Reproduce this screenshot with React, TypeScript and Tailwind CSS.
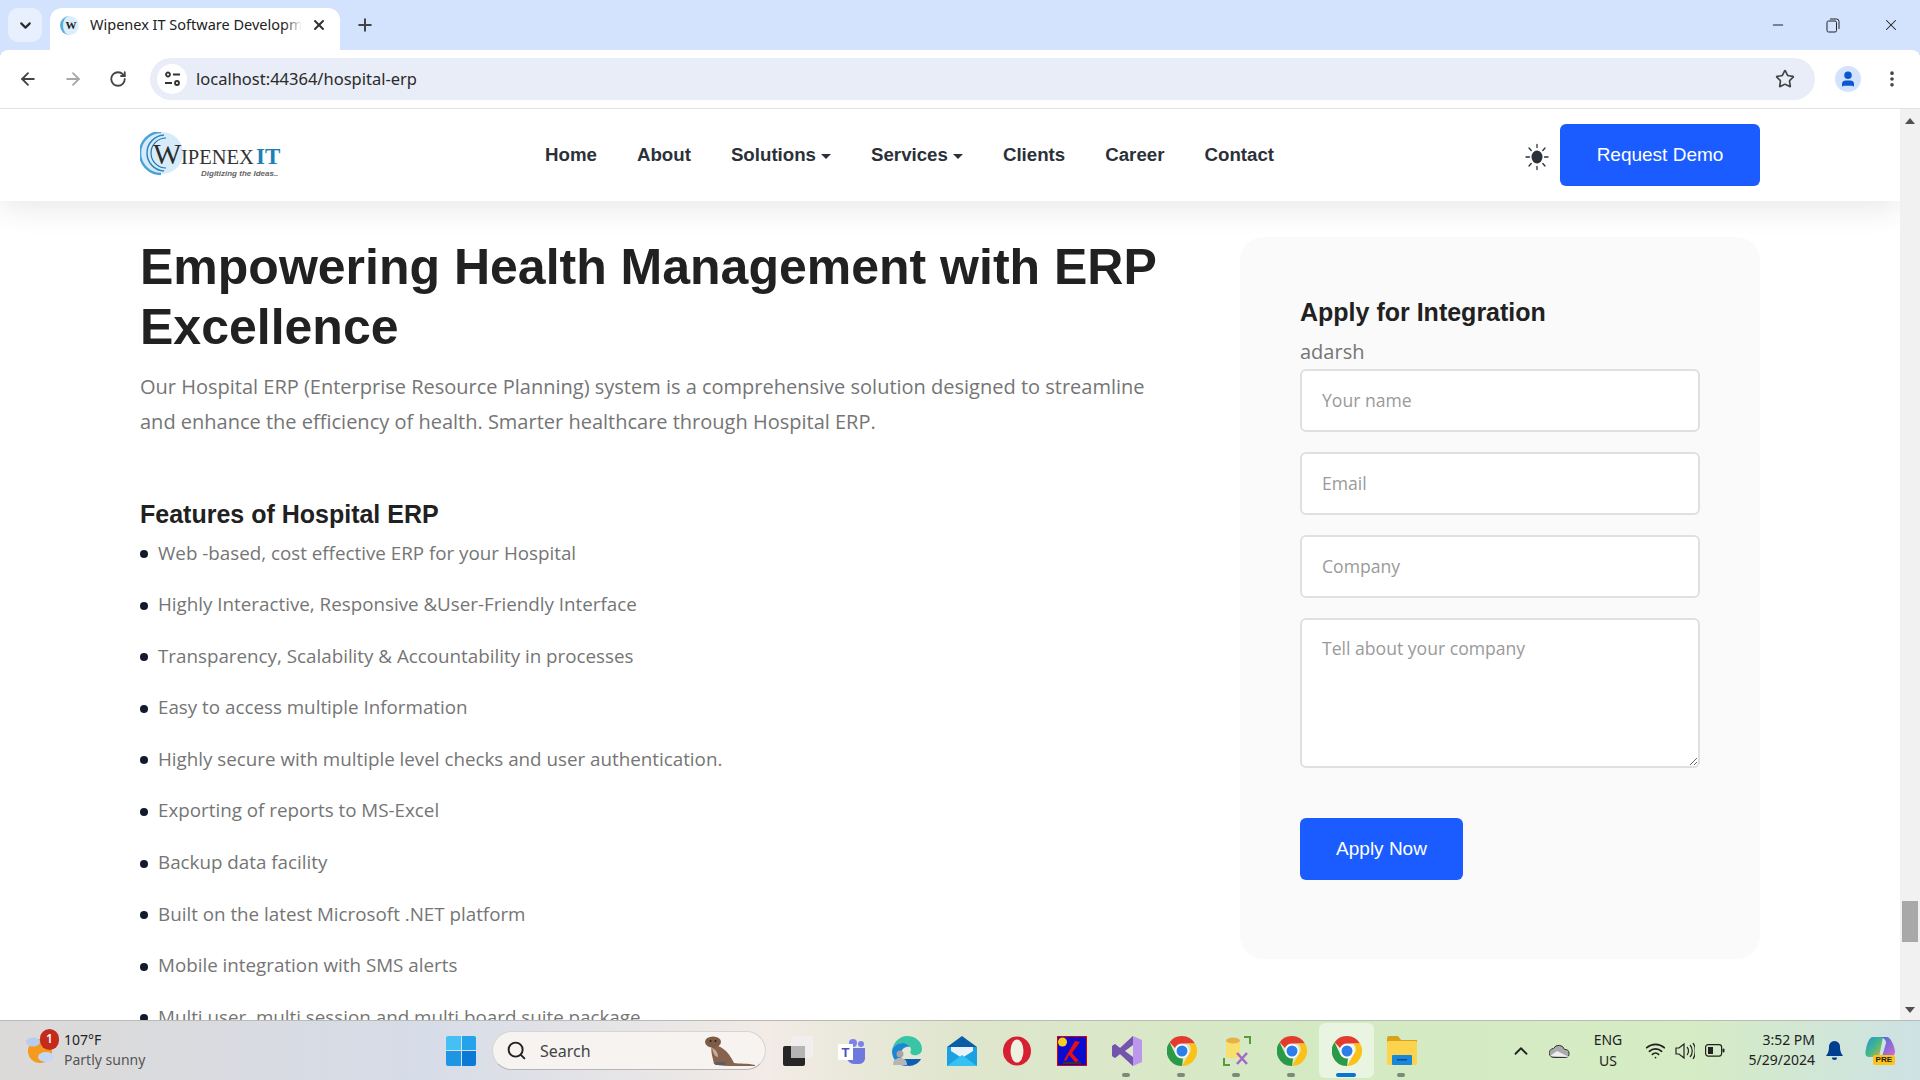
import { ArrowLeft, ArrowRight, ChevronDown, ChevronUp, EllipsisVertical, Minus, Plus, RotateCw, Search, Star, User, Wifi, X } from 'lucide-react';

const features = [
  'Web -based, cost effective ERP for your Hospital',
  'Highly Interactive, Responsive &User-Friendly Interface',
  'Transparency, Scalability & Accountability in processes',
  'Easy to access multiple Information',
  'Highly secure with multiple level checks and user authentication.',
  'Exporting of reports to MS-Excel',
  'Backup data facility',
  'Built on the latest Microsoft .NET platform',
  'Mobile integration with SMS alerts',
  'Multi user, multi session and multi board suite package',
];

const navItems = [
  { label: 'Home' },
  { label: 'About' },
  { label: 'Solutions', caret: true },
  { label: 'Services', caret: true },
  { label: 'Clients' },
  { label: 'Career' },
  { label: 'Contact' },
];

const ChromeIcon = () => (
  <svg width="30" height="30" viewBox="0 0 30 30">
    <path d="M15 0a15 15 0 0 1 13 7.5H15a7.5 7.5 0 0 0-7 4.6L2.6 6.2A15 15 0 0 1 15 0z" fill="#e33b2e" />
    <path d="M28 7.5A15 15 0 0 1 15 30l6.5-11.2A7.5 7.5 0 0 0 21 7.5z" fill="#fbc116" />
    <path d="M15 30A15 15 0 0 1 2.6 6.2L8.5 18.8a7.5 7.5 0 0 0 7.500 3.700z" fill="#2a9a48" />
    <circle cx="15" cy="15" r="7" fill="#fff" />
    <circle cx="15" cy="15" r="5.500" fill="#2f7de9" />
  </svg>
);

const SunIcon = () => (
  <svg width="24" height="28" viewBox="0 0 24 28" stroke="#2b3138" strokeWidth="1.300" strokeLinecap="round">
    <ellipse cx="12" cy="14" rx="5.500" ry="6.500" fill="#2b3138" stroke="none" />
    <path d="M12 1.500v3M12 23.500v3M1 14h3.500M19.500 14H23M4 5l2.200 2.500M20 5l-2.200 2.500M4 23l2.200-2.500M20 23l-2.200-2.500" />
  </svg>
);

const Logo = () => (
  <svg width="143" height="48" viewBox="0 0 143 48">
    <circle cx="22" cy="21" r="21" fill="#d7ecfa" />
    <path d="M21 0A21 21 0 0 0 21 42" fill="none" stroke="#4da3d8" strokeWidth="2.500" />
    <path d="M24 3A18 18 0 0 0 7 21a18 18 0 0 0 17 18" fill="none" stroke="#2f86bd" strokeWidth="1.500" />
    <path d="M26 6A15 15 0 0 0 11 21a15 15 0 0 0 15 15" fill="none" stroke="#1f74aa" strokeWidth="1.200" />
    <text x="13" y="32" fontFamily="'Liberation Serif', serif" fontSize="30" fill="#2d2d2d">W</text>
    <text x="41" y="32" fontFamily="'Liberation Serif', serif" fontSize="20.500" fill="#333">IPENEX</text>
    <text x="116" y="32" fontFamily="'Liberation Serif', serif" fontSize="23" fontWeight="700" fill="#1b7fb8">IT</text>
    <text x="61" y="44" fontFamily="'Liberation Sans', sans-serif" fontSize="8" fontStyle="italic" fontWeight="700" fill="#666">Digitizing the Ideas..</text>
  </svg>
);

const Favicon = () => (
  <div className="flex h-[19px] w-[19px] items-center justify-center rounded-full border-l-[3px] border-[#5aaee0] bg-[#dceefa] font-['Liberation_Serif',serif] text-[11px] font-bold text-[#222]">
    W
  </div>
);

const TaskSlot = ({ children, dot, active }: { children: React.ReactNode; dot?: boolean; active?: boolean }) => (
  <div className={`relative flex h-[55px] w-[55px] items-center justify-center rounded-md ${active ? 'bg-white/50' : ''}`}>
    {children}
    {dot && <span className="absolute bottom-[1px] left-[23px] h-[4px] w-[8px] rounded-full bg-[#7c8a78]" />}
    {active && <span className="absolute bottom-[1px] left-[17px] h-[4px] w-[20px] rounded-full bg-[#0a74d6]" />}
  </div>
);

export default function App() {
  return (
    <div className="flex h-screen w-full flex-col overflow-hidden bg-[#d3e3fd] font-['Open_Sans',sans-serif]">
      {/* tab strip */}
      <div className="flex h-[50px] shrink-0 items-start pl-[8px] pt-[8px] font-['Noto_Sans',sans-serif]">
        <div className="flex h-[34px] w-[34px] items-center justify-center rounded-[10px] bg-[#e9f0fd]">
          <ChevronDown size={17} strokeWidth={3} color="#2a2a2a" />
        </div>
        <div className="relative ml-[8px] flex h-[42px] w-[290px] items-center rounded-t-[12px] bg-white pb-[8px] pl-[10px]">
          <Favicon />
          <div className="relative ml-[11px] w-[212px] overflow-hidden whitespace-nowrap text-[14.500px] text-[#222]">
            Wipenex IT Software Development
            <span className="absolute inset-y-0 right-0 w-[18px] bg-gradient-to-r from-white/0 to-white" />
          </div>
          <X size={16} strokeWidth={3} color="#333" className="ml-[9px]" />
        </div>
        <Plus size={20} strokeWidth={2.4} color="#444" className="ml-[15px] mt-[7px]" />
        <div className="ml-auto flex h-[34px] items-center pr-[20px]">
          <Minus size={16} strokeWidth={1.6} color="#222" />
          <svg width="14" height="16" viewBox="0 0 14 16" fill="none" stroke="#222" className="ml-[40px]">
            <rect x="1" y="4" width="9.500" height="11" rx="1.500" />
            <path d="M4 2h6.500A2.500 2.500 0 0 1 13 4.500V12" />
          </svg>
          <X size={18} strokeWidth={1.4} color="#222" className="ml-[42px]" />
        </div>
      </div>

      {/* toolbar */}
      <div className="flex h-[59px] shrink-0 items-center rounded-t-[8px] border-b border-[#e2e2e2] bg-white font-['Noto_Sans',sans-serif]">
        <ArrowLeft size={20} strokeWidth={2.200} color="#444" className="ml-[18px]" />
        <ArrowRight size={20} strokeWidth={2.200} color="#a8a8a8" className="ml-[25px]" />
        <RotateCw size={18} strokeWidth={2.400} color="#444" className="ml-[26px]" />
        <div className="ml-[23px] flex h-[42px] w-[1665px] items-center rounded-full bg-[#e9edf7] pl-[7px] pr-[20px]">
          <div className="flex h-[30px] w-[30px] items-center justify-center rounded-full bg-white">
            <svg width="17" height="16" viewBox="0 0 17 16" fill="none" stroke="#333" strokeWidth="1.800">
              <circle cx="4" cy="3.500" r="2" />
              <path d="M9 3.500h7M1 12h7" />
              <circle cx="13" cy="12" r="2" />
            </svg>
          </div>
          <span className="ml-[9px] mt-[1px] text-[16.500px] text-[#2a2a2a]">localhost:44364/hospital-erp</span>
          <Star size={20} strokeWidth={2} color="#444" className="ml-auto" />
        </div>
        <div className="ml-[20px] flex h-[26px] w-[26px] items-center justify-center rounded-full bg-[#d3e3fd]">
          <User size={18} fill="#0b57d0" color="#0b57d0" />
        </div>
        <EllipsisVertical size={20} strokeWidth={2.400} color="#444" className="ml-[21px]" />
      </div>

      {/* page + scrollbar */}
      <div className="flex min-h-0 flex-1 bg-white">
        <div className="relative min-w-0 flex-1 overflow-hidden">
          <header className="relative z-10 flex h-[92px] items-center bg-white pl-[140px] pr-[140px] shadow-[0_8px_30px_rgba(0,0,0,0.09)]">
            <div className="w-[405px] shrink-0 pt-[1px]">
              <Logo />
            </div>
            <nav className="flex items-center gap-[40px] font-['Liberation_Sans',sans-serif] text-[18.700px] font-bold text-[#2b3138]">
              {navItems.map((item) => (
                <span key={item.label} className="flex items-center gap-[5px]">
                  {item.label}
                  {item.caret && <span className="mt-[3px] h-0 w-0 border-x-[5px] border-t-[5px] border-x-transparent border-t-[#2b3138]" />}
                </span>
              ))}
            </nav>
            <div className="ml-auto flex items-center">
              <div className="mr-[11px] mt-[3px]">
                <SunIcon />
              </div>
              <button className="h-[62px] w-[200px] rounded-[6px] bg-[#1a5cff] font-['Liberation_Sans',sans-serif] text-[19px] text-white">
                Request Demo
              </button>
            </div>
          </header>

          <main className="flex items-start justify-between pl-[140px] pr-[140px]">
            <div className="w-[1020px] pt-[36px]">
              <h1 className="font-['Liberation_Sans',sans-serif] text-[50px] font-bold leading-[60px] text-[#212121]">
                Empowering Health Management with ERP Excellence
              </h1>
              <p className="mt-[12px] text-[20px] leading-[35px] text-[#757575]">
                Our Hospital ERP (Enterprise Resource Planning) system is a comprehensive solution designed to streamline and enhance the efficiency of health. Smarter healthcare through Hospital ERP.
              </p>
              <h3 className="mt-[60px] font-['Liberation_Sans',sans-serif] text-[25px] font-bold leading-[30px] text-[#212121]">
                Features of Hospital ERP
              </h3>
              <ul className="mt-[10.500px]">
                {features.map((item) => (
                  <li key={item} className="mb-[24.600px] flex items-center text-[18.800px] leading-[27px] text-[#757575]">
                    <span className="mr-[10px] mt-[2px] h-[8px] w-[8px] shrink-0 rounded-full bg-[#141a2e]" />
                    {item}
                  </li>
                ))}
              </ul>
            </div>

            <aside className="mt-[36px] h-[722px] w-[520px] shrink-0 rounded-[24px] bg-[#fafafa] px-[60px] pt-[60px]">
              <h4 className="font-['Liberation_Sans',sans-serif] text-[25px] font-bold leading-[30px] text-[#212121]">
                Apply for Integration
              </h4>
              <div className="mt-[11px] text-[20px] leading-[27px] text-[#757575]">adarsh</div>
              <form className="mt-[4px] flex flex-col gap-[20px]">
                <input placeholder="Your name" className="h-[63px] rounded-[6px] border-2 border-[#e0e0e0] bg-white px-[20px] pb-[2px] text-[17.600px] placeholder:text-[#9a9a9a]" />
                <input placeholder="Email" className="h-[63px] rounded-[6px] border-2 border-[#e0e0e0] bg-white px-[20px] pb-[2px] text-[17.600px] placeholder:text-[#9a9a9a]" />
                <input placeholder="Company" className="h-[63px] rounded-[6px] border-2 border-[#e0e0e0] bg-white px-[20px] pb-[2px] text-[17.600px] placeholder:text-[#9a9a9a]" />
                <textarea placeholder="Tell about your company" className="h-[150px] rounded-[6px] border-2 border-[#e0e0e0] bg-white px-[20px] py-[15px] text-[17.600px] placeholder:text-[#9a9a9a]" />
                <button type="button" className="mt-[30px] h-[62px] w-[163px] rounded-[6px] bg-[#1a5cff] font-['Liberation_Sans',sans-serif] text-[19px] text-white">
                  Apply Now
                </button>
              </form>
            </aside>
          </main>
        </div>

        <div className="flex w-[20px] shrink-0 flex-col items-center bg-[#f1f1f1] pb-[7px] pt-[9px]">
          <span className="h-0 w-0 border-x-[5px] border-b-[6px] border-x-transparent border-b-[#505050]" />
          <span className="mt-auto h-[41px] w-[16px] bg-[#a8a8a8]" />
          <span className="mt-[65px] h-0 w-0 border-x-[5px] border-t-[6px] border-x-transparent border-t-[#505050]" />
        </div>
      </div>

      {/* taskbar */}
      <footer className="flex h-[60px] shrink-0 items-center border-t border-[#b8bcb4] bg-[linear-gradient(90deg,#dcdad8_0%,#d6dce8_22%,#f2ebe6_40%,#dfe6cd_50%,#d3eac2_70%,#d6ecc4_88%,#cde2e4_100%)] font-['Noto_Sans',sans-serif] text-[#222]">
        <div className="relative ml-[25px] h-[46px] w-[39px] shrink-0">
          <svg width="30" height="36" viewBox="0 0 30 36" className="absolute left-0 top-[4px]">
            <circle cx="15" cy="19" r="12" fill="#f39a1f" />
            <ellipse cx="8" cy="10" rx="7" ry="4.500" fill="#b7cdf0" />
            <ellipse cx="21" cy="25" rx="8" ry="5" fill="#c5d7f2" />
          </svg>
          <span className="absolute left-[15px] top-[1px] flex h-[21px] w-[19px] items-center justify-center rounded-full bg-[#c42b1c] text-[12px] font-semibold text-white">1</span>
        </div>
        <div className="w-[126px] shrink-0 pb-[2px] text-[14px] leading-[20px]">
          <div>107°F</div>
          <div className="text-[#555]">Partly sunny</div>
        </div>
        <div className="ml-[256px] grid h-[30px] w-[30px] shrink-0 grid-cols-2 gap-[1px] overflow-hidden rounded-[2px]">
          <span className="bg-[#45c0f5]" />
          <span className="bg-[#25a3ea]" />
          <span className="bg-[#1e96e6]" />
          <span className="bg-[#0a7ad6]" />
        </div>
        <div className="ml-[16px] flex h-[39px] w-[274px] shrink-0 items-center rounded-full border border-[#d5d5d5] border-b-[#b5b5b5] bg-[#f6f3f1] pl-[13px]">
          <Search size={21} strokeWidth={2.200} color="#222" />
          <span className="ml-[13px] text-[16px] text-[#444]">Search</span>
          <svg width="52" height="30" viewBox="0 0 52 30" className="ml-auto mr-[9px]">
            <path d="M8 9c8 0 16 5 22 18 5 1 14 0 21 2v1H30c-6 0-14 0-20-2C9 22 6 15 8 9z" fill="#86634c" />
            <ellipse cx="9" cy="6" rx="8" ry="5.500" fill="#7d5b45" />
            <circle cx="6.500" cy="5" r="1" fill="#222" />
            <circle cx="11.500" cy="5" r="1" fill="#222" />
            <path d="M8 12c3 1 6 4 6 9-3 0-5-4-6-9z" fill="#c9a99a" />
            <path d="M12 26h9l1 3H11z" fill="#5f5a6e" />
          </svg>
        </div>
        <div className="ml-[3px] flex shrink-0 items-center">
          <TaskSlot>
            <svg width="30" height="30" viewBox="0 0 30 30" className="ml-[3px]">
              <rect x="0" y="10" width="22" height="20" rx="2" fill="#262626" />
              <rect x="8" y="0" width="22" height="22" rx="2" fill="#f0f0f0" fillOpacity="0.85" />
              <rect x="8" y="10" width="14" height="12" fill="#b5b5b5" />
            </svg>
          </TaskSlot>
          <TaskSlot>
            <svg width="28" height="28" viewBox="0 0 28 28">
              <circle cx="23" cy="7" r="3" fill="#7b83eb" />
              <circle cx="15" cy="6" r="4" fill="#7b83eb" />
              <path d="M9 11h18v9a6 6 0 0 1-6 7h-5a7 7 0 0 1-7-7z" fill="#6f78dd" />
              <rect x="0" y="7" width="15" height="16" fill="#fff" />
              <text x="3.500" y="20" fontFamily="'Liberation Sans', sans-serif" fontSize="13" fontWeight="700" fill="#4b53bc">T</text>
            </svg>
          </TaskSlot>
          <TaskSlot>
            <svg width="30" height="30" viewBox="0 0 30 30">
              <path d="M15 0c9 0 15 6 15 13 0 5-5 7-9 6-3-1-3-3-2-5 0-4-4-7-8-7C6 7 1 11 0 15 1 7 7 0 15 0z" fill="#37c5a5" />
              <path d="M0 15c1-5 6-8 11-8 3 0 6 2 7 4-4-1-8 1-9 6-1 5 2 11 8 13C7 31 0 24 0 15z" fill="#1b86d3" />
              <path d="M17 30c-4-1-7-4-8-7h20c-2 4-7 7-12 7z" fill="#0e5fb0" />
              <circle cx="8" cy="18" r="3.500" fill="#a5a5a5" />
              <path d="M1 29c0-5 3-7 7-7s7 2 7 7z" fill="#b5b5b5" />
            </svg>
          </TaskSlot>
          <TaskSlot>
            <svg width="30" height="30" viewBox="0 0 30 30">
              <path d="M15 0L30 11v2H0v-2z" fill="#0a5ea8" />
              <rect x="0" y="11" width="30" height="19" fill="#1ba1e2" />
              <path d="M4 11h22v4l-11 7L4 15z" fill="#e8f2fa" />
              <path d="M0 30l15-11 15 11z" fill="#35c1f1" />
            </svg>
          </TaskSlot>
          <TaskSlot>
            <svg width="30" height="30" viewBox="0 0 30 30">
              <ellipse cx="15" cy="15" rx="14" ry="14.500" fill="#d61f30" />
              <ellipse cx="15" cy="15" rx="6.500" ry="11.500" fill="#eef0e0" />
            </svg>
          </TaskSlot>
          <TaskSlot>
            <svg width="30" height="30" viewBox="0 0 30 30">
              <rect x="0.500" y="0.500" width="29" height="29" fill="#0b0bd0" stroke="#e00000" />
              <circle cx="5.500" cy="6" r="4.500" fill="#f5d020" />
              <path d="M7 24L18 5l5 1-8 11 7 8-4 1-6-7-3 6z" fill="#e81010" />
              <path d="M6 26h18v2H6z" fill="#333" />
            </svg>
          </TaskSlot>
          <TaskSlot dot>
            <svg width="30" height="30" viewBox="0 0 30 30">
              <path d="M21 0l9 4v22l-9 4-13-12-5 4-3-2V10l3-2 5 4z" fill="#bb97ee" />
              <path d="M21 0v30L8 18l-5 4-3-2V10l3-2 5 4z" fill="#7455ad" />
              <path d="M21 9L13 15l8 6z" fill="#dfe8c9" />
            </svg>
          </TaskSlot>
          <TaskSlot dot>
            <ChromeIcon />
          </TaskSlot>
          <TaskSlot dot>
            <svg width="28" height="30" viewBox="0 0 28 30">
              <path d="M1 22v7h6M21 1h6v7" fill="none" stroke="#5a9a3c" strokeWidth="2" />
              <rect x="3" y="4" width="14" height="18" rx="2" fill="#f7e06e" />
              <ellipse cx="10" cy="4.500" rx="7" ry="3" fill="#e6b04a" />
              <path d="M14 28l10-11M24 28L14 17" stroke="#a368c9" strokeWidth="2.500" />
            </svg>
          </TaskSlot>
          <TaskSlot dot>
            <ChromeIcon />
          </TaskSlot>
          <TaskSlot active>
            <ChromeIcon />
          </TaskSlot>
          <TaskSlot dot>
            <svg width="30" height="30" viewBox="0 0 30 30">
              <path d="M0 2a2 2 0 0 1 2-2h9l3 4h16v6H0z" fill="#d9a21b" />
              <rect x="0" y="5" width="30" height="24" rx="1.500" fill="#fcd34d" />
              <rect x="5" y="19" width="20" height="10" rx="1" fill="#1a88d8" />
              <rect x="10" y="23" width="10" height="1.500" fill="#0c4f8c" />
            </svg>
          </TaskSlot>
        </div>

        <ChevronUp size={22} strokeWidth={2} color="#222" className="ml-[81px]" />
        <svg width="21" height="14" viewBox="0 0 21 14" className="ml-[17px]">
          <path d="M5 13.500a4.500 4.500 0 0 1-.5-9 6 6 0 0 1 11 1 4 4 0 0 1 1 8z" fill="#aaa" stroke="#333" strokeWidth="1" />
          <path d="M1 12l7-5 4 2 8 4z" fill="#eee" />
        </svg>
        <div className="ml-[23px] w-[30px] pb-[2px] text-center text-[14px] leading-[21px]">
          <div className="-mx-2">ENG</div>
          <div>US</div>
        </div>
        <Wifi size={21} strokeWidth={2} color="#222" className="ml-[22px]" />
        <svg width="20" height="18" viewBox="0 0 20 18" fill="none" stroke="#222" strokeWidth="1.200" className="ml-[9px]">
          <path d="M1 6h3l5-4v14l-5-4H1z" />
          <path d="M12 5c2 2 2 6 0 8M15 3c3 3 3 9 0 12M18 1c3 4 3 12 0 16" />
        </svg>
        <svg width="20" height="13" viewBox="0 0 20 13" className="ml-[10px]">
          <rect x="0.600" y="0.600" width="16" height="11.500" rx="2.500" fill="none" stroke="#222" strokeWidth="1.200" />
          <rect x="3" y="3" width="5" height="7" fill="#222" />
          <rect x="17.500" y="4.500" width="2" height="4" rx="1" fill="#222" />
        </svg>
        <div className="ml-[21px] w-[69px] shrink-0 pb-[2px] text-right text-[14px] leading-[20px]">
          <div className="whitespace-nowrap">3:52 PM</div>
          <div>5/29/2024</div>
        </div>
        <svg width="17" height="20" viewBox="0 0 17 20" className="ml-[11px]">
          <path d="M8.500 0a5.500 5.500 0 0 1 5.500 6c0 4 1 6 3 9H0c2-3 3-5 3-9a5.500 5.500 0 0 1 5.500-6z" fill="#003e92" />
          <path d="M6 16.500h5a2.500 2.500 0 0 1-5 0z" fill="#003e92" />
        </svg>
        <div className="relative ml-[22px] h-[28px] w-[30px] shrink-0">
          <svg width="30" height="22" viewBox="0 0 30 22">
            <defs>
              <linearGradient id="cop" x1="0" y1="0" x2="1" y2="1">
                <stop offset="0" stopColor="#2a8fdc" />
                <stop offset="0.500" stopColor="#3fb88c" />
                <stop offset="1" stopColor="#e0b030" />
              </linearGradient>
              <linearGradient id="cop2" x1="0" y1="0" x2="1" y2="1">
                <stop offset="0" stopColor="#3a6ce0" />
                <stop offset="1" stopColor="#d86ad0" />
              </linearGradient>
            </defs>
            <path d="M8 0h10l-4 20H4C0 20 0 16 1 12 2 7 4 0 8 0z" fill="url(#cop)" />
            <path d="M14 0h8c3 0 7 7 8 14 0 4-2 6-5 6h-8l4-14c.5-3-3-6-7-6z" fill="url(#cop2)" />
          </svg>
          <span className="absolute bottom-0 right-0 rounded-[2px] bg-[#fcc419] px-[3px] font-['Liberation_Sans',sans-serif] text-[8px] font-bold leading-[10px] text-[#222]">PRE</span>
        </div>
      </footer>
    </div>
  );
}
